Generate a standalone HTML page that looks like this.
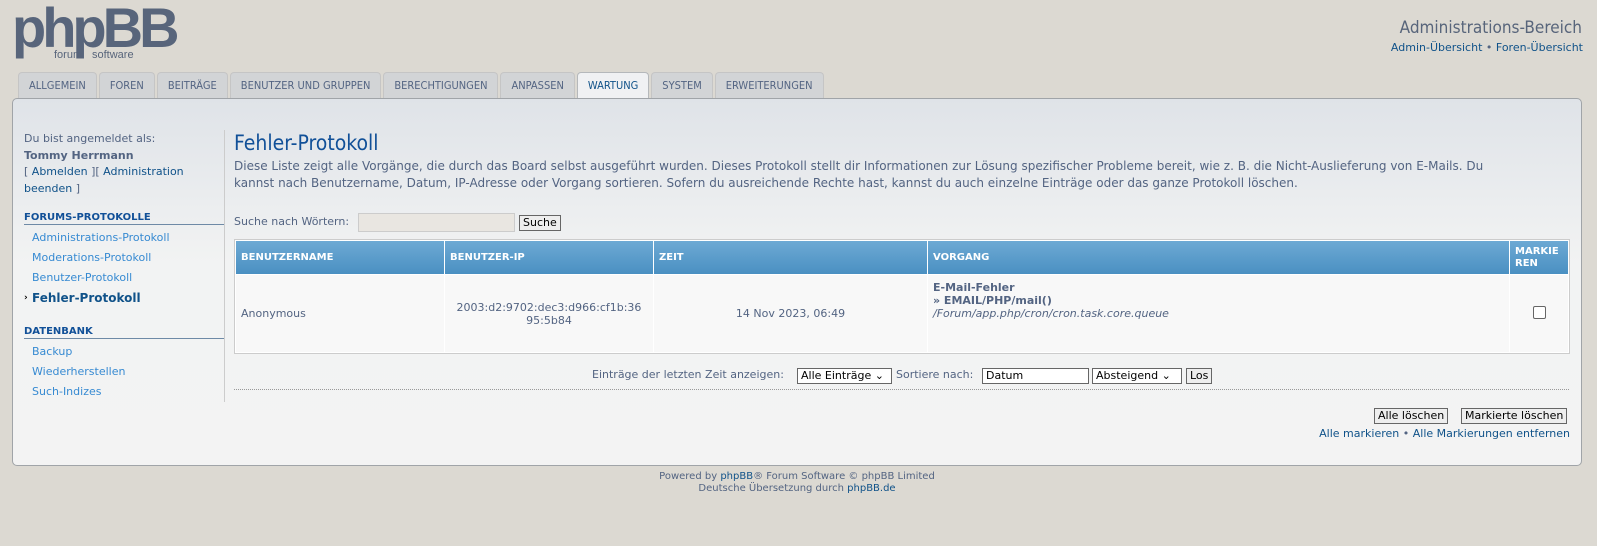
<!DOCTYPE html>
<html><head><meta charset="utf-8"><style>
*{box-sizing:border-box;margin:0;padding:0}
body{width:1597px;height:546px;background:#dcd9d2;font-family:"DejaVu Sans","Liberation Sans",sans-serif;font-size:11px;color:#536482;position:relative;overflow:hidden}
.a{position:absolute}
a{color:#105289;text-decoration:none}
.logo{left:12px;top:0px;font-family:"Liberation Sans",sans-serif;font-weight:bold;font-size:56px;color:#58657b;letter-spacing:-4px;line-height:56px}
.logo small{position:absolute;font-size:11px;font-weight:normal;letter-spacing:0;color:#58657b;line-height:11px}
.tabs{left:18px;top:72px;display:flex;gap:2px}
.tab{height:26px;border:1px solid #c5c5c5;border-bottom:none;border-radius:4px 4px 0 0;background:#d2d4d6;color:#536482;font-family:"DejaVu Sans Condensed","Liberation Sans Narrow","Liberation Sans",sans-serif;font-size:11px;padding:7px 10px 0;line-height:12px}
.tab.on{background:#f0f1f3;color:#105289;border-color:#b5b8bb;height:27px}
.panel{left:12px;top:98px;width:1570px;height:368px;border:1px solid #a0a4a8;border-radius:5px;background:linear-gradient(#dfe3e8,#f2f3f3 45%,#f3f3f3)}
.list a{display:block}
h1{font-family:"DejaVu Sans Condensed","Liberation Sans",sans-serif;font-weight:normal;font-size:21px;color:#115098}
.hd{font-weight:bold;font-size:10px;color:#115098;border-bottom:1px solid #6e8aa6;padding-bottom:1px;width:200px}
table{border-collapse:separate;border-spacing:1px;background:#fff;border:1px solid #ccc}
th{background:linear-gradient(#6da9d4,#4a90c2);color:#fff;font-size:10px;text-align:left;padding:0 5px;height:33px;font-weight:bold}
td{background:#f8f8f8;height:77px;padding:0 5px}
.btn{border:1px solid #666;background:#eee;color:#000;font-size:11px;padding:0 3px;height:16px;line-height:14px;display:inline-block}
.sel{border:1px solid #666;background:#fff;color:#000;height:16px;line-height:14px;padding:0 3px;position:absolute}
</style></head><body>
<div class="a logo">phpBB<small style="left:42px;top:50px">forum</small><small style="left:80px;top:50px">software</small></div>
<div class="a" style="right:15px;top:18px;font-size:17px;color:#58657b;font-family:'DejaVu Sans Condensed','Liberation Sans',sans-serif">Administrations-Bereich</div>
<div class="a" style="right:14px;top:41px"><a>Admin-Übersicht</a> • <a>Foren-Übersicht</a></div>
<div class="a tabs">
<div class="tab">ALLGEMEIN</div><div class="tab">FOREN</div><div class="tab">BEITRÄGE</div><div class="tab">BENUTZER UND GRUPPEN</div><div class="tab">BERECHTIGUNGEN</div><div class="tab">ANPASSEN</div><div class="tab on">WARTUNG</div><div class="tab">SYSTEM</div><div class="tab">ERWEITERUNGEN</div>
</div>
<div class="a panel"></div>
<div class="a" style="left:224px;top:130px;width:1px;height:272px;background:#ccc"></div>
<div class="a" style="left:24px;top:131px;line-height:16.5px;width:200px">
Du bist angemeldet als:<br><b>Tommy Herrmann</b><br>[ <a>Abmelden</a> ][ <a>Administration beenden</a> ]
</div>
<div class="a" style="left:24px;top:212px">
<div class="hd">FORUMS-PROTOKOLLE</div>
<div class="list" style="padding-left:8px;line-height:20px;margin-top:3px"><a style="color:#368ad2">Administrations-Protokoll</a><a style="color:#368ad2">Moderations-Protokoll</a><a style="color:#368ad2">Benutzer-Protokoll</a><a style="font-weight:bold;font-size:12px;color:#105289;position:relative"><span style="position:absolute;left:-8px;color:#000;font-size:9px">›</span>Fehler-Protokoll</a></div>
</div>
<div class="a" style="left:24px;top:326px">
<div class="hd">DATENBANK</div>
<div class="list" style="padding-left:8px;line-height:20px;margin-top:3px"><a style="color:#368ad2">Backup</a><a style="color:#368ad2">Wiederherstellen</a><a style="color:#368ad2">Such-Indizes</a></div>
</div>
<h1 class="a" style="left:234px;top:131px">Fehler-Protokoll</h1>
<div class="a" style="left:234px;top:158px;width:1290px;font-size:12px;line-height:17px;color:#536482">Diese Liste zeigt alle Vorgänge, die durch das Board selbst ausgeführt wurden. Dieses Protokoll stellt dir Informationen zur Lösung spezifischer Probleme bereit, wie z. B. die Nicht-Auslieferung von E-Mails. Du kannst nach Benutzername, Datum, IP-Adresse oder Vorgang sortieren. Sofern du ausreichende Rechte hast, kannst du auch einzelne Einträge oder das ganze Protokoll löschen.</div>
<div class="a" style="left:234px;top:215px">Suche nach Wörtern:</div>
<div class="a" style="left:358px;top:213px;width:157px;height:19px;background:#e9e6e1;border:1px solid #ccc"></div>
<div class="a btn" style="left:519px;top:215px">Suche</div>
<table class="a" style="left:234px;top:239px;width:1336px">
<tr><th style="width:208px">BENUTZERNAME</th><th style="width:208px">BENUTZER-IP</th><th style="width:273px">ZEIT</th><th>VORGANG</th><th style="width:58px;line-height:12px">MARKIE<br>REN</th></tr>
<tr><td>Anonymous</td><td style="text-align:center;line-height:13px">2003:d2:9702:dec3:d966:cf1b:36<br>95:5b84</td><td style="text-align:center">14 Nov 2023, 06:49</td><td style="vertical-align:top;padding-top:6px;line-height:13px"><b>E-Mail-Fehler<br>» EMAIL/PHP/mail()</b><br><i>/Forum/app.php/cron/cron.task.core.queue</i></td><td style="text-align:center"><span style="display:inline-block;width:13px;height:13px;border:1px solid #666;border-radius:2px;background:#fff"></span></td></tr>
</table>
<div class="a" style="left:592px;top:368px">Einträge der letzten Zeit anzeigen:</div>
<div class="sel" style="left:797px;top:368px;width:95px">Alle Einträge ⌄</div>
<div class="a" style="left:896px;top:368px">Sortiere nach:</div>
<div class="sel" style="left:982px;top:368px;width:107px">Datum</div>
<div class="sel" style="left:1092px;top:368px;width:90px">Absteigend ⌄</div>
<div class="a btn" style="left:1186px;top:368px">Los</div>
<div class="a" style="left:234px;top:389px;width:1335px;border-top:1px dotted #999"></div>
<div class="a btn" style="left:1374px;top:408px">Alle löschen</div>
<div class="a btn" style="left:1461px;top:408px">Markierte löschen</div>
<div class="a" style="right:27px;top:427px"><a>Alle markieren</a> • <a>Alle Markierungen entfernen</a></div>
<div class="a" style="left:0;width:1594px;top:471px;text-align:center;font-size:10px;line-height:12px">Powered by <a>phpBB</a>® Forum Software © phpBB Limited<br>Deutsche Übersetzung durch <a>phpBB.de</a></div>
</body></html>
